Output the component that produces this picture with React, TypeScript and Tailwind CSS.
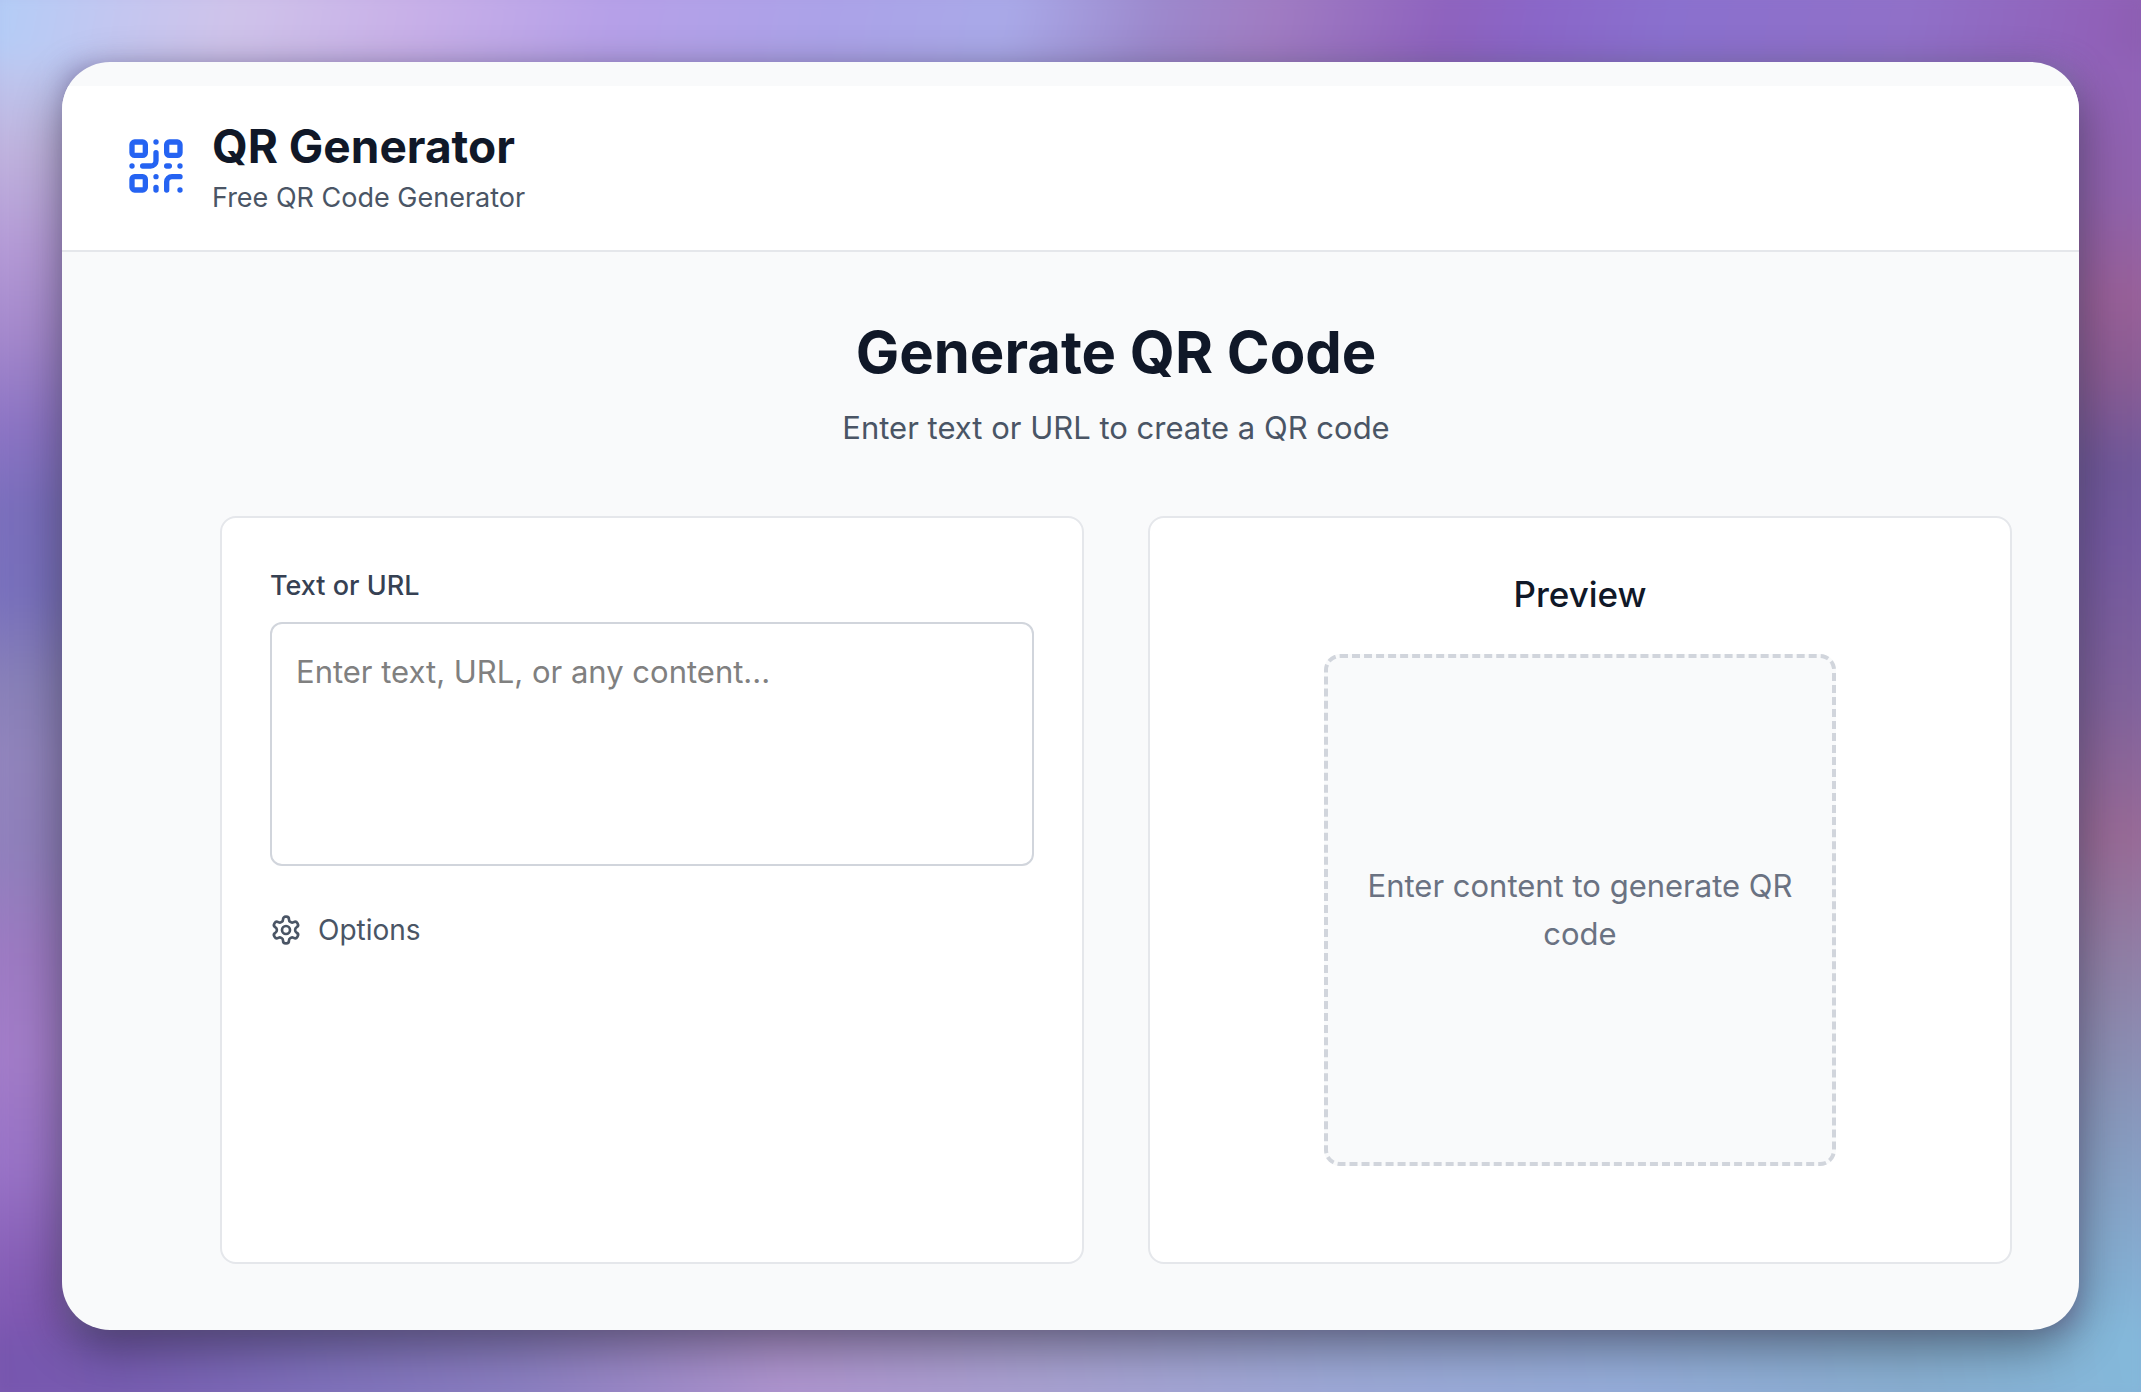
import { QrCode } from "lucide-react";
import { LuSettings } from "react-icons/lu";

function Wallpaper() {
  return (
    <div aria-hidden="true" className="absolute inset-0 overflow-hidden bg-[#8f84c0]">
      <div className="absolute -inset-6 blur-[14px]">
        <div className="absolute inset-x-0 top-0 h-24 bg-[linear-gradient(100deg,#b0cef8_0%,#c4c6f0_7%,#cfc3ea_12%,#c8b0e8_20%,#b6a0e8_29%,#aba2e8_39%,#a9a9e8_47%,#9c88cc_54%,#a07cc2_59%,#8e62be_67%,#8a66c8_71%,#8a70ce_77%,#9070c8_88%,#9060b8_97%,#8a5cac_100%)]" />
        <div className="absolute inset-x-0 bottom-0 h-24 bg-[linear-gradient(80deg,#7854ae_0%,#765cb0_7%,#7e70ba_16%,#8a7ec0_25%,#ae94ce_37%,#a8a0d0_48%,#9ca8d6_62%,#94acd8_75%,#88aed0_88%,#84b8da_98%)]" />
        <div className="absolute bottom-20 left-0 top-20 w-24 bg-[linear-gradient(180deg,#bccaf2_0%,#c0b4de_7%,#b49ad6_15%,#a488cc_22%,#8c74c4_29%,#7a6ebc_35%,#7870bc_42%,#8880b8_49%,#9184bc_55%,#9080bc_62%,#9c7ac2_70%,#a27cc8_78%,#9872c6_87%,#8860b8_94%,#7c56b0_100%)]" />
        <div className="absolute bottom-20 right-0 top-20 w-24 bg-[linear-gradient(180deg,#9062b8_0%,#9062ac_11%,#986098_19%,#8a5c94_25%,#70589a_32%,#7459a0_38%,#80629c_50%,#986a96_61%,#8f82a8_72%,#8898bc_83%,#84b0d4_96%,#84b8da_100%)]" />
      </div>
    </div>
  );
}

function Header() {
  return (
    <header className="flex items-center gap-6 border-b-2 border-gray-200 bg-white px-[62px] pb-8 pt-7">
      <QrCode className="size-16 text-[#2563f2]" />
      <div>
        <h1 className="text-[46px] font-bold leading-16 text-gray-900">QR Generator</h1>
        <p className="text-[27px] leading-10 text-gray-600">Free QR Code Generator</p>
      </div>
    </header>
  );
}

export default function App() {
  return (
    <div className="relative flex min-h-screen flex-col p-[62px] font-['Inter',sans-serif] antialiased">
      <Wallpaper />
      <div className="relative flex grow flex-col overflow-hidden rounded-[48px] bg-gray-50 pt-6 shadow-[0_16px_48px_rgba(0,0,0,0.42)]">
        <Header />
        <main className="flex grow flex-col pb-[66px] pl-[158px] pr-[67px] pt-16">
          <div className="text-center">
            <h2 className="text-[58px] font-bold leading-18 text-gray-900">Generate QR Code</h2>
            <p className="mt-4 text-[31px] leading-12 text-gray-600">Enter text or URL to create a QR code</p>
          </div>
          <div className="mt-16 grid grow grid-cols-2 gap-16">
            <section className="rounded-2xl border-2 border-gray-200 bg-white p-12">
              <label htmlFor="content" className="block text-[27px] font-medium leading-10 text-gray-700">
                Text or URL
              </label>
              <textarea
                id="content"
                placeholder="Enter text, URL, or any content..."
                className="mt-4 block h-[244px] w-full resize-none rounded-xl border-2 border-gray-300 bg-white p-6 text-[31px] leading-12 placeholder:text-[#808080]"
              />
              <button type="button" className="mt-11 flex items-center gap-4 text-[28px] leading-10 text-gray-600">
                <LuSettings className="size-8" />
                Options
              </button>
            </section>
            <section className="rounded-2xl border-2 border-gray-200 bg-white p-12 text-center">
              <h3 className="text-[35px] font-medium leading-14 text-gray-900">Preview</h3>
              <div className="mx-auto mt-8 flex size-128 items-center justify-center rounded-2xl border-4 border-dashed border-gray-300 bg-gray-50 px-8">
                <p className="text-[31px] leading-12 text-gray-500">Enter content to generate QR code</p>
              </div>
            </section>
          </div>
        </main>
      </div>
    </div>
  );
}
